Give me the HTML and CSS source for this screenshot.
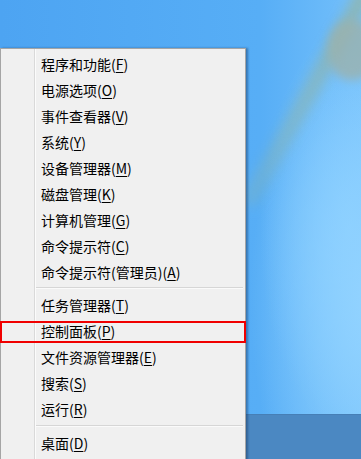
FILE: index.html
```html
<!DOCTYPE html>
<html lang="zh-CN">
<head>
    <meta charset="UTF-8">
    <meta name="viewport" content="width=device-width, initial-scale=1.0">
    <title>Win+X 菜单</title>
    <link rel="stylesheet" href="styles.css">
</head>
<body>
    <div class="screen">
        <div class="desktop"></div>
        <div class="taskbar"></div>

        <ul class="winx-menu">
            <li class="menu-item">程序和功能(<u>F</u>)</li>
            <li class="menu-item">电源选项(<u>O</u>)</li>
            <li class="menu-item">事件查看器(<u>V</u>)</li>
            <li class="menu-item">系统(<u>Y</u>)</li>
            <li class="menu-item">设备管理器(<u>M</u>)</li>
            <li class="menu-item">磁盘管理(<u>K</u>)</li>
            <li class="menu-item">计算机管理(<u>G</u>)</li>
            <li class="menu-item">命令提示符(<u>C</u>)</li>
            <li class="menu-item">命令提示符(管理员)(<u>A</u>)</li>
            <li class="menu-sep"></li>
            <li class="menu-item">任务管理器(<u>T</u>)</li>
            <li class="menu-item marked">控制面板(<u>P</u>)</li>
            <li class="menu-item">文件资源管理器(<u>E</u>)</li>
            <li class="menu-item">搜索(<u>S</u>)</li>
            <li class="menu-item">运行(<u>R</u>)</li>
            <li class="menu-sep low"></li>
            <li class="menu-item">桌面(<u>D</u>)</li>
        </ul>
    </div>
</body>
</html>
```

FILE: styles.css
```css
html, body {
    margin: 0;
    padding: 0;
}

body {
    font-family: "Noto Sans CJK SC", "Liberation Sans", sans-serif;
    background: #4aa2f2;
}

.screen {
    position: relative;
    width: 361px;
    height: 459px;
    overflow: hidden;
    display: flex;
    flex-direction: column;
}

/* wallpaper */
.desktop {
    position: relative;
    height: 414px;
    background:
        radial-gradient(ellipse 120px 260px at 370px 300px, #92d3ff 0%, rgba(146, 211, 255, 0) 100%),
        radial-gradient(ellipse 90px 200px at 350px 230px, #84cbff 0%, rgba(132, 203, 255, 0) 100%),
        linear-gradient(to right, #4da4f2 0px, #57aef6 260px, #74c0fb 361px);
}

.desktop::before {
    content: "";
    position: absolute;
    left: 303px;
    top: -40px;
    width: 16px;
    height: 260px;
    background: linear-gradient(to bottom, rgba(150, 180, 160, 0.8), rgba(130, 180, 180, 0.35));
    filter: blur(6px);
    transform: rotate(29deg);
}

.desktop::after {
    content: "";
    position: absolute;
    left: 328px;
    top: 20px;
    width: 48px;
    height: 60px;
    border-radius: 45%;
    background: rgba(155, 178, 172, 0.8);
    filter: blur(5px);
}

.taskbar {
    flex: 1;
    background: #4b88c2;
    border-top: 1px solid #467fb6;
}

/* Win+X menu */
.winx-menu {
    position: absolute;
    top: 48px;
    left: 0;
    width: 244px;
    height: 420px;
    margin: 0;
    padding: 2px 0 0 0;
    list-style: none;
    border: 1px solid #a5a5a5;
    background:
        linear-gradient(to right,
            #f0f0f0 33px, #d9d9d9 33px, #d9d9d9 34px,
            #fbfbfb 34px, #fbfbfb 35px, #f0f0f0 35px);
    box-shadow: 2px 0 2px rgba(20, 50, 90, 0.45);
}

.menu-item {
    position: relative;
    display: flex;
    align-items: center;
    height: 26px;
    padding-left: 40px;
    font-size: 14px;
    color: #000;
    white-space: nowrap;
}

.menu-item u {
    text-underline-offset: 2px;
}

.menu-sep {
    height: 1px;
    margin: 2px 2px 3px 35px;
    background: #d6d6d6;
    border-bottom: 1px solid #fafafa;
}

.menu-sep.low {
    margin: 3px 2px 3px 35px;
}

/* red annotation box */
.marked::after {
    content: "";
    position: absolute;
    left: -1px;
    right: -1px;
    top: 3px;
    bottom: 1px;
    border: 2px solid #f00000;
}
```
